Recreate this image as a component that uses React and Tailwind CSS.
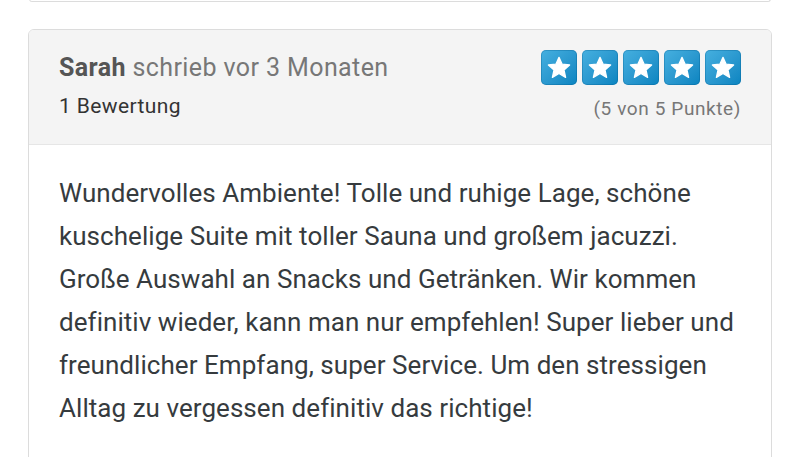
import React from 'react';

function Star() {
  return (
    <div className="w-[36px] h-[35px] rounded-[5px] bg-gradient-to-br from-[#45b0e0] to-[#0784c0] flex items-center justify-center shadow-[inset_0_0_0_1px_rgba(0,90,140,0.3)]">
      <svg width="26" height="26" viewBox="0 0 24 24">
        <path
          d="M12 2.2l2.9 6.3 6.9.7-5.2 4.6 1.5 6.8L12 17.1l-6.1 3.5 1.5-6.8L2.2 9.2l6.9-.7z"
          fill="#fff"
          stroke="#fff"
          strokeWidth="1.2"
          strokeLinejoin="round"
        />
      </svg>
    </div>
  );
}

export default function App() {
  return (
    <div className="w-[800px] h-[457px] overflow-hidden bg-white font-['Roboto',sans-serif]">
      <div className="mx-[29px] h-[3px] border-x border-b border-[#dcdcdc] rounded-b-[5px] -mt-[1px]" />
      <div className="mx-[28px] mt-[27px] border border-[#dcdcdc] rounded-[6px] overflow-hidden">
        <div className="bg-[#f4f4f4] border-b border-[#e6e6e6] px-[30px] pt-[20px] pb-[22px] flex justify-between">
          <div>
            <div className="text-[25px] leading-[36px] tracking-[0.4px] text-[#777]">
              <span className="font-bold text-[#555]">Sarah</span> schrieb vor 3 Monaten
            </div>
            <div className="text-[21px] leading-[28px] tracking-[0.4px] mt-[6px] text-[#333]">1 Bewertung</div>
          </div>
          <div className="flex flex-col items-end">
            <div className="flex gap-[5px]">
              <Star />
              <Star />
              <Star />
              <Star />
              <Star />
            </div>
            <div className="text-[19px] leading-[26px] tracking-[0.6px] mt-[11px] text-[#777]">(5 von 5 Punkte)</div>
          </div>
        </div>
        <div className="px-[30px] pt-[27px] pb-[40px] text-[26px] leading-[43px] tracking-[0.05px] text-[#363b3e]">
          Wundervolles Ambiente! Tolle und ruhige Lage, schöne kuschelige Suite mit toller Sauna und großem jacuzzi. Große Auswahl an Snacks und Getränken. Wir kommen definitiv wieder, kann man nur empfehlen! Super lieber und freundlicher Empfang, super Service. Um den stressigen Alltag zu vergessen definitiv das richtige!
        </div>
      </div>
    </div>
  );
}
